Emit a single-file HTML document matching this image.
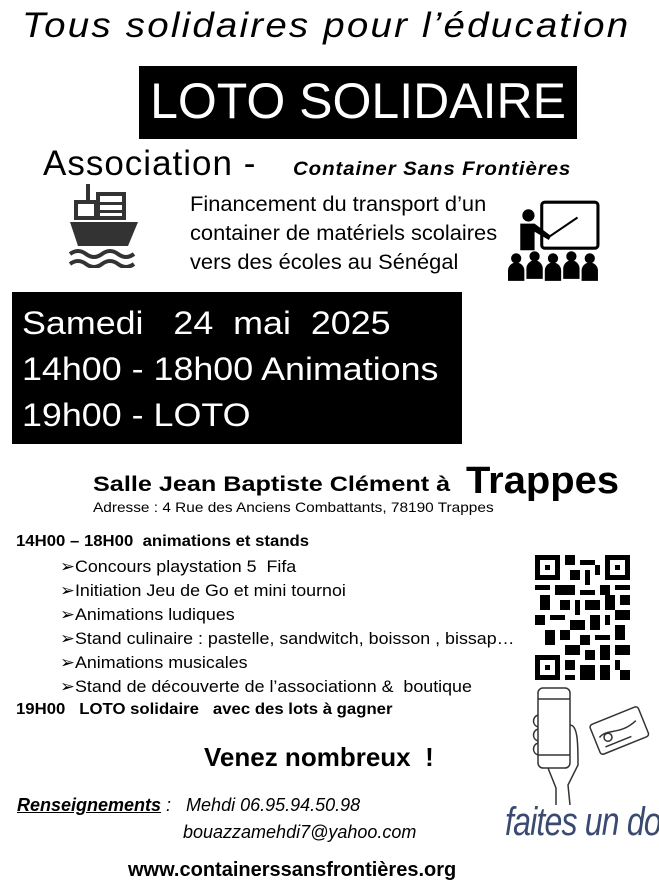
<!DOCTYPE html>
<html><head><meta charset="utf-8"><style>
body{margin:0;width:659px;height:885px;background:#fff;position:relative;overflow:hidden;font-family:"Liberation Sans",sans-serif;color:#000}
.a{position:absolute;white-space:nowrap;transform-origin:left top}
</style></head><body>
<div class="a" style="left:22px;top:6px;font-size:35px;font-style:italic;letter-spacing:2px;transform:scaleX(1.1)">Tous solidaires pour l’éducation</div>
<div class="a" style="left:139px;top:66px;width:438px;height:73px;background:#000"></div>
<div class="a" style="left:139px;top:70px;width:438px;text-align:center;color:#fff;font-size:50px;line-height:62px">LOTO SOLIDAIRE</div>
<div class="a" style="left:43px;top:144px;font-size:35px;letter-spacing:1px">Association -</div>
<div class="a" style="left:293px;top:159px;font-size:19px;font-style:italic;font-weight:bold;letter-spacing:.8px;transform:scaleX(1.08)">Container Sans Frontières</div>
<svg class="a" style="left:68px;top:184px" width="72" height="84" viewBox="0 0 72 84" fill="#333">
<rect x="18" y="0" width="4" height="20"/><rect x="8" y="18" width="20" height="16" fill="none" stroke="#333" stroke-width="4"/>
<rect x="30" y="10" width="26" height="24" fill="none" stroke="#333" stroke-width="4"/><rect x="30" y="18" width="26" height="3"/><rect x="30" y="26" width="26" height="3"/>
<path d="M2 38H70L60 62H10Z"/>
<path d="M2 70q8-6 16 0t16 0t16 0t16 0" fill="none" stroke="#333" stroke-width="4"/>
<path d="M2 80q8-6 16 0t16 0t16 0t16 0" fill="none" stroke="#333" stroke-width="4"/>
</svg>
<div class="a" style="left:190px;top:190px;font-size:21px;line-height:29px;transform:scaleX(1.04)">Financement du transport d’un<br>container de matériels scolaires<br>vers des écoles au Sénégal</div>
<svg class="a" style="left:508px;top:198px" width="92" height="86" viewBox="0 0 90 82">
<rect x="33" y="3" width="55" height="45" rx="3" fill="none" stroke="#000" stroke-width="3"/>
<line x1="40" y1="37" x2="68" y2="18" stroke="#000" stroke-width="2"/>
<circle cx="20" cy="16" r="6"/><path d="M12 24h14l16 12-2 4-14-8v18H12Z"/>
<g><circle cx="8" cy="58" r="5"/><path d="M0 80v-10a8 8 0 0 1 16 0v10Z"/><circle cx="26" cy="56" r="5"/><path d="M18 78v-10a8 8 0 0 1 16 0v10Z"/><circle cx="44" cy="58" r="5"/><path d="M36 80v-10a8 8 0 0 1 16 0v10Z"/><circle cx="62" cy="56" r="5"/><path d="M54 78v-10a8 8 0 0 1 16 0v10Z"/><circle cx="80" cy="58" r="5"/><path d="M72 80v-10a8 8 0 0 1 16 0v10Z"/></g>
</svg>
<div class="a" style="left:12px;top:292px;width:450px;height:152px;background:#000"></div>
<div class="a" style="left:22px;top:300px;color:#fff;font-size:32px;line-height:46px;transform:scaleX(1.12)">Samedi&nbsp;&nbsp; 24&nbsp; mai&nbsp; 2025<br>14h00 - 18h00 Animations<br>19h00 - LOTO</div>
<div class="a" style="left:93px;top:458px;font-size:21px;font-weight:bold;transform:scaleX(1.0)"><span style="display:inline-block;transform:scaleX(1.2);transform-origin:left;margin-right:70px">Salle Jean Baptiste Clément à</span> <span style="font-size:38px;position:relative;top:2px;display:inline-block;transform:scaleX(1.05);transform-origin:left">Trappes</span></div>
<div class="a" style="left:93px;top:499px;font-size:14px;transform:scaleX(1.1)">Adresse : 4 Rue des Anciens Combattants, 78190 Trappes</div>
<div class="a" style="left:16px;top:533px;font-size:15.5px;font-weight:bold;transform:scaleX(1.08)">14H00 – 18H00&nbsp; animations et stands</div>
<div class="a" style="left:60px;top:555px;font-size:17px;line-height:24px;transform:scaleX(1.05)">➢Concours playstation 5&nbsp; Fifa<br>➢Initiation Jeu de Go et mini tournoi<br>➢Animations ludiques<br>➢Stand culinaire : pastelle, sandwitch, boisson , bissap…<br>➢Animations musicales<br>➢Stand de découverte de l’associationn &amp;&nbsp; boutique</div>
<div class="a" style="left:16px;top:701px;font-size:15.5px;font-weight:bold;transform:scaleX(1.08)">19H00&nbsp;&nbsp; LOTO solidaire&nbsp;&nbsp; avec des lots à gagner</div>
<div class="a" style="left:204px;top:742px;font-size:26px;font-weight:bold;transform:scaleX(1.0)">Venez nombreux&nbsp; !</div>
<div class="a" style="left:17px;top:795px;font-size:18px;font-style:italic"><b style="text-decoration:underline">Renseignements</b> :&nbsp;&nbsp; Mehdi 06.95.94.50.98</div>
<div class="a" style="left:183px;top:822px;font-size:18px;font-style:italic">bouazzamehdi7@yahoo.com</div>
<div class="a" style="left:128px;top:859px;font-size:20px;font-weight:bold">www.containerssansfrontières.org</div>
<svg class="a" style="left:535px;top:555px" width="95" height="125" viewBox="0 0 19 25" shape-rendering="crispEdges">
<g fill="#000">
<rect x="0" y="0" width="5" height="5"/><rect x="1" y="1" width="3" height="3" fill="#fff"/><rect x="2" y="2" width="1" height="1"/>
<rect x="14" y="0" width="5" height="5"/><rect x="15" y="1" width="3" height="3" fill="#fff"/><rect x="16" y="2" width="1" height="1"/>
<rect x="0" y="20" width="5" height="5"/><rect x="1" y="21" width="3" height="3" fill="#fff"/><rect x="2" y="22" width="1" height="1"/>
<path d="M6 0h2v2h-2zM9 1h3v1h-3zM7 3h2v2h-2zM10 3h1v3h-1zM12 2h1v2h-1zM0 6h3v1h-3zM4 6h4v2h-4zM9 7h3v1h-3zM13 6h2v2h-2zM16 6h3v1h-3zM1 8h2v3h-2zM5 9h2v2h-2zM8 9h1v3h-1zM10 9h3v2h-3zM14 8h2v3h-2zM17 8h2v2h-2zM0 12h2v2h-2zM3 12h3v1h-3zM7 13h3v2h-3zM11 12h2v3h-2zM14 12h1v2h-1zM16 11h3v2h-3zM2 15h2v3h-2zM5 15h2v2h-2zM9 16h2v2h-2zM12 16h3v1h-3zM16 14h2v3h-2zM6 18h3v2h-3zM10 19h2v2h-2zM13 18h2v3h-2zM16 18h3v2h-3zM6 21h2v2h-2zM9 22h3v3h-3zM13 22h2v3h-2zM16 21h1v2h-1zM17 23h2v2h-2zM6 24h2v1h-2z"/>
</g></svg>
<svg class="a" style="left:528px;top:685px" width="130" height="120" viewBox="0 0 130 120" fill="none" stroke="#333" stroke-width="1.5">
<rect x="10" y="3" width="32" height="80" rx="5"/><line x1="10" y1="14" x2="42" y2="14"/><line x1="10" y1="70" x2="42" y2="70"/>
<path d="M10 30c-6 2-6 10 0 12M10 44c-6 2-6 10 0 12M10 58c-6 2-6 10 0 12"/>
<path d="M42 40c8 0 8 20 8 40l-10 20 2 20M20 83l8 20v17"/>
<g transform="rotate(-22 90 45)"><rect x="65" y="30" width="52" height="32" rx="3"/><path d="M70 45c10-6 20 6 40-2" /><circle cx="78" cy="48" r="4"/><line x1="72" y1="56" x2="100" y2="56"/></g>
</svg>
<div class="a" style="left:505px;top:800px;font-size:40px;color:#3a4a70;font-style:italic;letter-spacing:-1px;transform:scaleX(.8)">faites un don</div>
</body></html>
